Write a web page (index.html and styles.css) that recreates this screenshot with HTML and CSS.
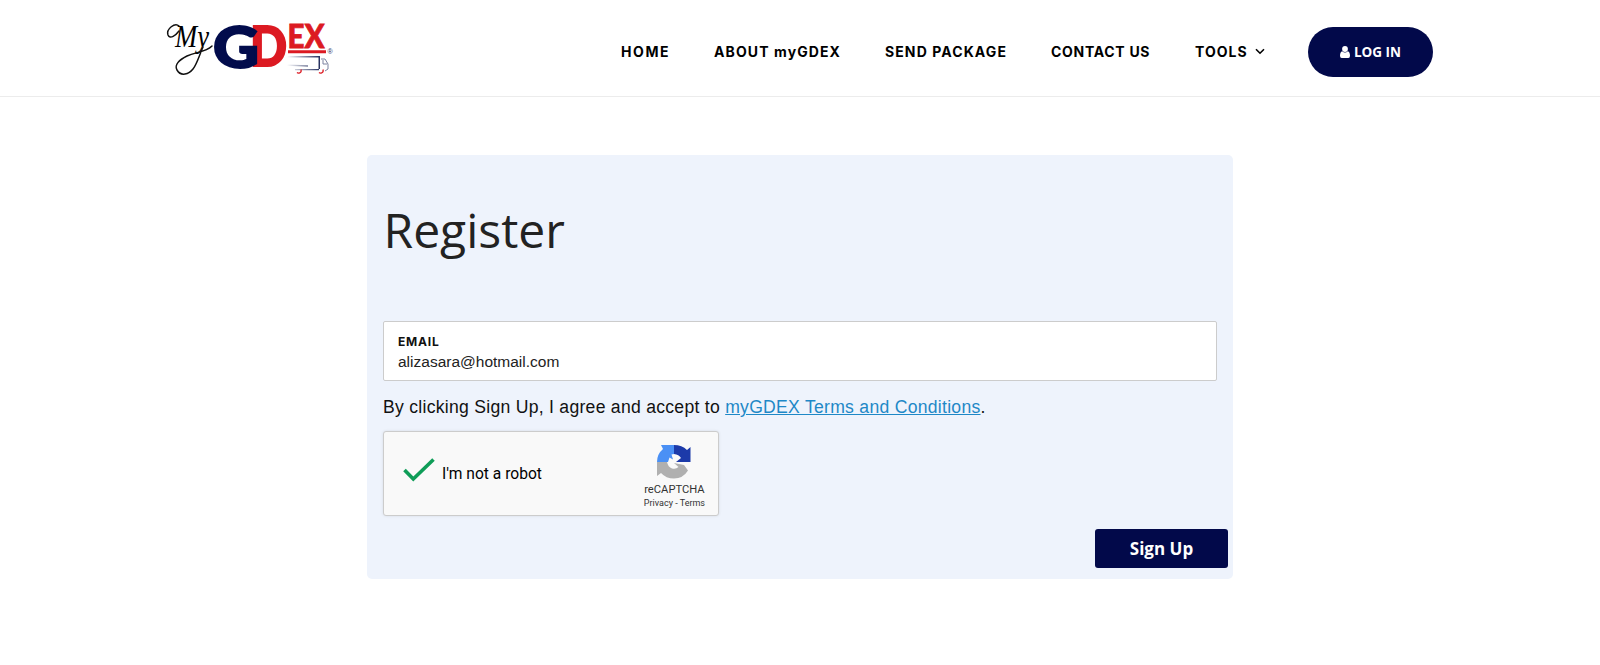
FILE: index.html
```html
<!DOCTYPE html>
<html lang="en">
	<head>
		<meta charset="utf-8">
		<title>myGDEX - Register</title>
		<link rel="stylesheet" href="styles.css">
	</head>
	<body>
		<header class="header">
			<a class="logo" href="#">
				<svg width="170" height="56" viewBox="165 20 170 56">
					<defs>
						<linearGradient id="fade" x1="0" x2="1">
							<stop offset="0" stop-color="#fff"/>
							<stop offset="1" stop-color="#26305f"/>
						</linearGradient>
					</defs>
					<text class="logo-script" x="175" y="47" textLength="34" lengthAdjust="spacingAndGlyphs">My</text>
					<path class="swash" d="M179 26c-4-4-13 3-11 9 2 5 8 0 11-4M212 46c-6 6-16 6-25 10-8 4-13 9-10 14 4 7 12 4 16-1 4-5 6-13 10-22"/>
					<text class="logo-d" x="250" y="66" textLength="37" lengthAdjust="spacingAndGlyphs">D</text>
					<text class="logo-g" x="213" y="67.500" textLength="46" lengthAdjust="spacingAndGlyphs">G</text>
					<text class="logo-ex" x="287.500" y="48" textLength="37" lengthAdjust="spacingAndGlyphs">EX</text>
					<path fill="#dc1a22" d="M288 50.300h38v3h-38z"/>
					<text class="logo-r" x="327.500" y="54">®</text>
					<path fill="url(#fade)" d="M287 56h33v13h-1.500V57.500H287zM287 64.500l21 .8v1.500l-21-1zM295 69h24v1.200h-24z"/>
					<path fill="none" stroke="#7c83a0" d="M321 59h4l3 5v5l-3 2M323 60v4h4"/>
					<path fill="none" stroke="#dc1a22" stroke-width="1.300" d="M301 69.500c1 4-3 4-4 3M323 69.500c1 4-3 4-4 3"/>
				</svg>
			</a>
			<nav class="nav">
				<a class="home" href="#">HOME</a>
				<a class="about" href="#">ABOUT myGDEX</a>
				<a class="send" href="#">SEND PACKAGE</a>
				<a class="contact" href="#">CONTACT US</a>
				<a class="tools" href="#">TOOLS</a>
				<svg class="chevron" width="10" height="7" viewBox="0 0 10 7"><path d="M1 1.200l4 4 4-4"/></svg>
			</nav>
			<a class="login" href="#">
				<svg width="10" height="12" viewBox="0 0 10 12"><circle cx="5" cy="3" r="2.900"/><path d="M2.200 5.200Q5 7.600 7.800 5.200 10 6 10 9.800 10 12 8.300 12H1.700Q0 12 0 9.800 0 6 2.200 5.200z"/></svg>
				<span>LOG IN</span>
			</a>
		</header>

		<main class="card">
			<h1>Register</h1>
			<label class="field">
				<span class="field-label">EMAIL</span>
				<input class="field-input" type="text" value="alizasara@hotmail.com">
			</label>
			<p class="terms">By clicking Sign Up, I agree and accept to <a href="#">myGDEX Terms and Conditions</a>.</p>
			<div class="captcha">
				<svg class="check" width="32" height="24" viewBox="0 0 32 24"><path d="M1.500 12l8.800 9L30.500 1.500"/></svg>
				<span class="captcha-text">I'm not a robot</span>
				<div class="captcha-brand">
					<svg width="34" height="34" viewBox="0 0 34 34">
						<path fill="#4a90f5" d="M4 0h13v9l-2.500.5 1.500 5-3.500-2-1.500 4.500H0Q0 9 6 4z"/>
						<path fill="#1c3aa9" d="M17 0q8 0 13 5l3.500-3V17H19l5-4Q22 9.500 17 9z"/>
						<path fill="#b0b0b0" d="M0 17h10q1 5 5 6.500 4 1 6.500-1.500L17 18l10 2 4 5.500q-5 8-14 8Q9 33.500 4 28L0 31z"/>
					</svg>
					<span class="brand-name">reCAPTCHA</span>
					<span class="brand-links">Privacy - Terms</span>
				</div>
			</div>
			<button class="signup">Sign Up</button>
		</main>
	</body>
</html>
```

FILE: styles.css
```css
*
{
	box-sizing: border-box;
}
body
{
	margin: 0;
	background: #fff;
	color: #111;
	font-family: "Liberation Sans", Arial, sans-serif;
}

.header
{
	display: flex;
	align-items: center;
	height: 97px;
	padding: 0 167px 0 165px;
	border-bottom: 1px solid #ececec;
}
.logo
{
	display: flex;
	width: 170px;
}
.logo-script
{
	font: italic 31px "Liberation Serif", serif;
}
.swash
{
	fill: none;
	stroke: #111;
	stroke-width: 1.5;
	stroke-linecap: round;
}
.logo-g, .logo-d, .logo-ex
{
	font-family: Lato, sans-serif;
	font-weight: 900;
}
.logo-g
{
	font-size: 58px;
	fill: #020c4c;
	stroke: #020c4c;
	stroke-width: 2;
}
.logo-d
{
	font-size: 55px;
	fill: #dc1a22;
	stroke: #dc1a22;
	stroke-width: 2;
}
.logo-ex
{
	font-size: 31.5px;
	fill: #dc1a22;
	stroke: #dc1a22;
	stroke-width: .8;
}
.logo-r
{
	font-size: 7px;
	fill: #26305f;
}

.nav
{
	display: flex;
	align-items: center;
	margin-left: 286px;
	padding-top: 7px;
	font: 700 14px "Inter", sans-serif;
}
.nav a
{
	color: #000;
	text-decoration: none;
	white-space: nowrap;
}
.home
{
	width: 93px;
	letter-spacing: 1.6px;
}
.about
{
	width: 171px;
	letter-spacing: 1.1px;
}
.send
{
	width: 166px;
	letter-spacing: 1.1px;
}
.contact
{
	width: 144px;
	letter-spacing: .7px;
}
.tools
{
	width: 60px;
	letter-spacing: 1px;
}
.chevron path
{
	fill: none;
	stroke: #000;
	stroke-width: 1.6;
}
.login
{
	display: flex;
	align-items: center;
	justify-content: center;
	gap: 4px;
	width: 125px;
	height: 50px;
	margin: 7px 0 0 auto;
	border-radius: 25px;
	background: #02094a;
	color: #fff;
	font: bold 13.5px "Open Sans", sans-serif;
	text-decoration: none;
}
.login svg
{
	fill: #fff;
}

.card
{
	display: flex;
	flex-direction: column;
	width: 866px;
	height: 424px;
	margin: 58px 0 0 367px;
	padding: 41px 16px 0;
	border-radius: 5px;
	background: #eef3fc;
}
h1
{
	margin: 0;
	height: 125px;
	padding-left: .5px;
	color: #222;
	font: 48px/67px "Open Sans", sans-serif;
}
.field
{
	display: flex;
	flex-direction: column;
	height: 60px;
	padding: 12px 14px 0;
	border: 1px solid #ccc;
	border-radius: 2px;
	background: #fff;
}
.field-label
{
	font: 700 12px/16px "Inter", sans-serif;
	letter-spacing: .8px;
}
.field-input
{
	height: 22px;
	margin-top: 1px;
	padding: 0;
	border: 0;
	color: #222;
	font: 15.5px "Liberation Sans", Arial, sans-serif;
}
.terms
{
	margin: 14px 0 12px;
	font-size: 17.6px;
	line-height: 24px;
	letter-spacing: .27px;
}
.terms a
{
	color: #1e88c7;
}

.captcha
{
	display: flex;
	align-items: center;
	width: 336px;
	height: 85px;
	padding: 0 13px 0 19px;
	border: 1px solid #ccc;
	border-radius: 3px;
	background: #f9f9f9;
	box-shadow: 0 0 3px rgba(0, 0, 0, .1);
	color: #000;
	font-family: Roboto, sans-serif;
}
.check
{
	margin-top: -7px;
}
.check path
{
	fill: none;
	stroke: #0f9d58;
	stroke-width: 3.6;
}
.captcha-text
{
	margin-left: 7px;
	font-size: 15.6px;
}
.captcha-brand
{
	display: flex;
	flex-direction: column;
	align-items: center;
	margin-left: auto;
	padding-top: 7px;
	color: #333;
}
.brand-name
{
	margin-top: 4px;
	font-size: 11.2px;
	line-height: 14px;
}
.brand-links
{
	font-size: 9px;
	line-height: 12px;
}
.signup
{
	align-self: flex-end;
	width: 133px;
	height: 39px;
	margin: 13px -11px 0 0;
	border: 0;
	border-radius: 3px;
	background: #02094a;
	color: #fff;
	font: bold 17px "Open Sans", sans-serif;
}
```
